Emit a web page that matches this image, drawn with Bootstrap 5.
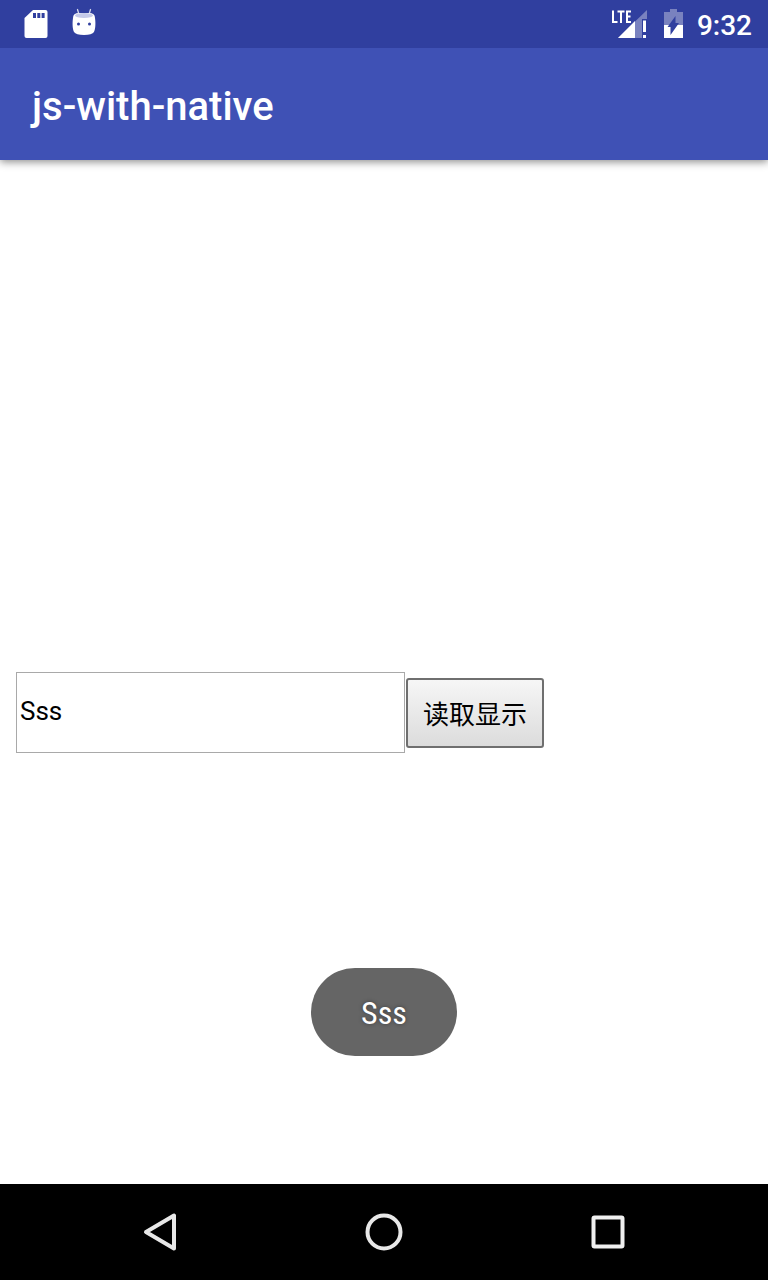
<!DOCTYPE html>
<html lang="zh-CN">
<head>
<meta charset="utf-8">
<meta name="viewport" content="width=device-width, initial-scale=1">
<title>js-with-native</title>
<link href="https://cdn.jsdelivr.net/npm/bootstrap@5.3.0/dist/css/bootstrap.min.css" rel="stylesheet">
<style>
  body { font-family: Roboto, "Noto Sans CJK SC", sans-serif; background: #fff; color: #000; }
  .status-bar { height: 48px; background: #303f9f; color: #fff; padding: 0 16px 0 20px; z-index: 2; }
  .clock { font-size: 28px; line-height: 48px; font-weight: 500; margin-left: 8px; padding-top: 4px; }
  .app-bar { height: 112px; background: #3f51b5; color: #fff; padding: 6px 32px 0; box-shadow: 0 2px 8px rgba(0,0,0,.45); z-index: 1; }
  .app-title { font-size: 40px; line-height: 48px; font-weight: 500; }
  .half { flex: 1 1 0; }
  .reader { padding: 0 16px; gap: 1px; }
  .reader-input { width: 389px; height: 81px; border: 1px solid #a9a9a9; border-radius: 0; padding: 0 3px 4px; font-size: 26px; color: #000; background: #fff; }
  .reader-btn { height: 70px; margin-top: 1px; border: 2px solid #6f6f6f; border-radius: 3px; padding: 0 15px; font-size: 26px; line-height: 40px; font-family: "Noto Sans CJK SC", sans-serif; color: #000; background: linear-gradient(#f6f6f6, #dcdcdc); }
  .toast-layer { bottom: 128px; }
  .toast-pill { background: #656565; color: #fff; padding: 21px 50px 19px; font-family: "Roboto Condensed", Roboto, sans-serif; font-size: 32px; line-height: 48px; text-shadow: 0 0 4px rgba(0,0,0,.4); }
  .nav-keys { height: 96px; background: #000; padding: 0 48px; }
  .nav-key { border: 0; background: none; }
  svg { display: block; }
</style>
</head>
<body>
<div class="d-flex flex-column min-vh-100">
  <div class="status-bar d-flex align-items-center justify-content-between position-relative">
    <div class="d-flex gap-3">
      <svg width="32" height="32" viewBox="0 0 32 32" aria-label="SD card"><path fill="#fff" d="M13 2h12.500q2 0 2 2v24q0 2-2 2h-19q-2 0-2-2V10z"/><path fill="#303f9f" d="M13 5h3v5h-3zM17.300 5h3v5h-3zM21.600 5h3v5h-3z"/></svg>
      <svg width="32" height="32" viewBox="0 0 32 32" aria-label="Android"><path stroke="#fff" stroke-opacity=".8" stroke-width="1.300" stroke-linecap="round" d="M9.500 1.500l1.500 5M22.500 1.500l-1.500 5"/><path fill="#fff" d="M5 10q0-5 6-5h10q6 0 6 5c1 7 0 12-1 14q-2 3-10 3T6 24C5 22 4 17 5 10z"/><ellipse cx="16" cy="7.500" rx="9" ry="2.500" fill="#c5cae9"/><circle cx="10.500" cy="16" r="1.500" fill="#303f9f"/><circle cx="21.500" cy="16" r="1.500" fill="#303f9f"/></svg>
    </div>
    <div class="d-flex align-items-center">
      <svg width="40" height="32" viewBox="0 0 40 32" aria-label="LTE"><path fill="#7982bf" d="M38 2v9h-5v19H9z"/><path fill="#fff" d="M26 13v17H9zM34 12.500h3v11.500h-3zM34 27h3v3h-3z"/><path fill="none" stroke="#fff" stroke-width="2" d="M4 2.500v11.500h4.500M8.500 3.500h7M12 3v12M22 3.500h-4v10.500h4M18 8.500h3.500"/></svg>
      <svg class="ms-2" width="32" height="32" viewBox="0 0 32 32" aria-label="Battery"><path fill="#7982bf" d="M13 1h7v3h6v13H7V4h6z"/><path fill="#fff" d="M7 17h19v13H7z"/><path fill="#303f9f" d="M18.500 8v7H22l-8.500 12v-8H10.500z"/></svg>
      <div class="clock">9:32</div>
    </div>
  </div>
  <header class="app-bar d-flex align-items-center position-relative">
    <h1 class="app-title m-0">js-with-native</h1>
  </header>
  <main class="flex-grow-1 d-flex flex-column position-relative">
    <div class="half"></div>
    <div class="half">
      <form class="reader d-flex align-items-center" onsubmit="return false">
        <input class="reader-input" type="text" value="Sss" aria-label="文本">
        <button class="reader-btn" type="button">读取显示</button>
      </form>
    </div>
    <div class="toast-layer position-absolute start-0 end-0 d-flex justify-content-center">
      <div class="toast-pill rounded-pill" role="status">Sss</div>
    </div>
  </main>
  <nav class="nav-keys d-flex" aria-label="System">
    <button class="nav-key col p-0 d-flex justify-content-center align-items-center" type="button" aria-label="Back"><svg width="48" height="48" viewBox="0 0 48 48"><path fill="none" stroke="#e8e8e8" stroke-width="4" stroke-linejoin="round" d="M38 7.500v33L10 24z"/></svg></button>
    <button class="nav-key col p-0 d-flex justify-content-center align-items-center" type="button" aria-label="Home"><svg width="48" height="48" viewBox="0 0 48 48"><circle cx="24" cy="24" r="16.500" fill="none" stroke="#e8e8e8" stroke-width="4"/></svg></button>
    <button class="nav-key col p-0 d-flex justify-content-center align-items-center" type="button" aria-label="Overview"><svg width="48" height="48" viewBox="0 0 48 48"><rect x="9.500" y="9.500" width="29" height="29" rx="1" fill="none" stroke="#f0f0f0" stroke-width="4"/></svg></button>
  </nav>
</div>
<script src="https://cdn.jsdelivr.net/npm/bootstrap@5.3.0/dist/js/bootstrap.bundle.min.js"></script>
</body>
</html>
